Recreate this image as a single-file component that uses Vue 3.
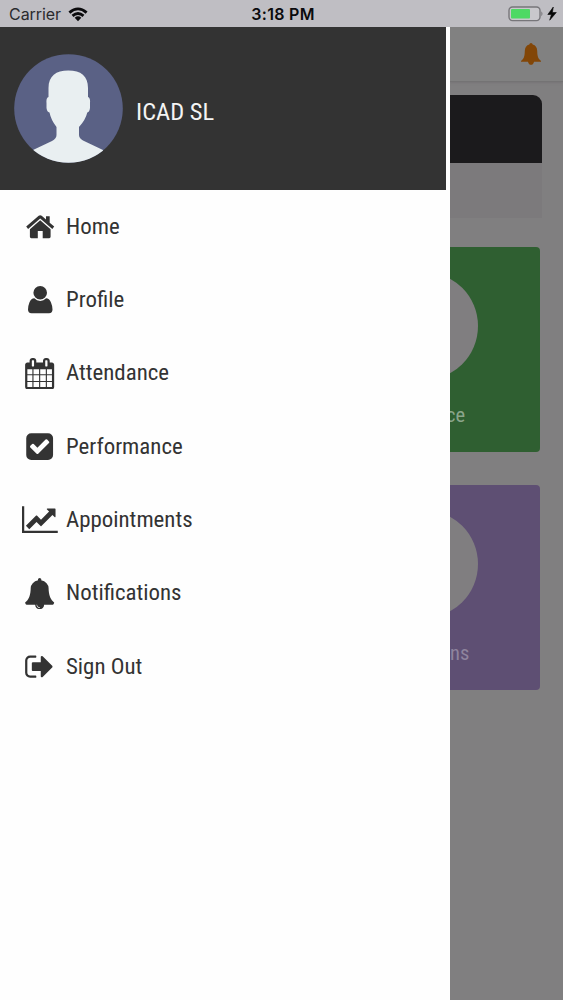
<script setup>
const items = [
  { label: 'Home', w: 1792, box: '0 0 40 40', d: 'M20.2 8.200Q21 8.200 21.700 8.800L26 12.500V9.300H29.700V15.700L34.200 19.600L32.300 22L20.200 11.600L8.100 22L6.200 19.600L18.700 8.800Q19.400 8.200 20.200 8.200zM20.200 13.200L30.600 22.200V29.800Q30.600 31.200 29.200 31.200H22.700V24H17.800V31.200H11.300Q9.900 31.200 9.900 29.800V22.200z' },
  { label: 'Profile', w: 1792, box: '0 0 40 40', d: 'M20.200 6A6.800 6.800 0 0 1 20.200 19.600A6.800 6.800 0 0 1 20.200 6zM14.300 18.300Q16.800 20.900 20.200 20.900T26.100 18.300Q29.200 18.300 30.900 22.200Q32.500 25.800 32.500 29.600Q32.500 33.200 29 33.200H11.500Q8 33.200 8 29.600Q8 25.800 9.500 22.200Q11.200 18.300 14.300 18.300z' },
  { label: 'Attendance', w: 1792, d: 'M192 1664h288v-288h-288v288zm352 0h320v-288h-320v288zm-352-352h288v-320h-288v320zm352 0h320v-320h-320v320zm-352-384h288v-288h-288v288zm736 736h320v-288h-320v288zm-384-736h320v-288h-320v288zm768 736h288v-288h-288v288zm-384-352h320v-320h-320v320zm-352-864v-288q0-13-9.500-22.500t-22.500-9.500h-64q-13 0-22.500 9.500t-9.500 22.500v288q0 13 9.500 22.500t22.500 9.500h64q13 0 22.500-9.500t9.500-22.500zm736 864h288v-320h-288v320zm-384-384h320v-288h-320v288zm384 0h288v-288h-288v288zm32-480v-288q0-13-9.500-22.500t-22.500-9.500h-64q-13 0-22.500 9.500t-9.500 22.500v288q0 13 9.500 22.500t22.500 9.500h64q13 0 22.500-9.500t9.500-22.500zm384-64v1280q0 52-38 90t-90 38h-1408q-52 0-90-38t-38-90v-1280q0-52 38-90t90-38h128v-96q0-66 47-113t113-47h64q66 0 113 47t47 113v96h384v-96q0-66 47-113t113-47h64q66 0 113 47t47 113v96h128q52 0 90 38t38 90z' },
  { label: 'Performance', w: 1792, d: 'M813 1299l614-614q19-19 19-45t-19-45l-102-102q-19-19-45-19t-45 19l-467 467-211-211q-19-19-45-19t-45 19l-102 102q-19 19-19 45t19 45l358 358q19 19 45 19t45-19zm851-883v960q0 119-84.500 203.500t-203.500 84.500h-960q-119 0-203.500-84.500t-84.500-203.500v-960q0-119 84.500-203.500t203.500-84.500h960q119 0 203.500 84.500t84.500 203.500z' },
  { label: 'Appointments', w: 2048, d: 'M2048 1536v128h-2048v-1536h128v1408h1920zm-128-1248v435q0 21-19.500 29.500t-35.500-7.500l-121-121-633 633q-10 10-23 10t-23-10l-233-233-416 416-192-192 585-585q10-10 23-10t23 10l233 233 464-464-121-121q-16-16-7.500-35.500t29.500-19.500h435q14 0 23 9t9 23z' },
  { label: 'Notifications', w: 1792, d: 'M912 1696q0-16-16-16-59 0-101.500-42.500t-42.500-101.500q0-16-16-16t-16 16q0 73 51.500 124.500t124.500 51.500q16 0 16-16zm816-288q0 52-38 90t-90 38h-448q0 106-75 181t-181 75-181-75-75-181h-448q-52 0-90-38t-38-90q50-42 91-88t85-119.500 74.500-158.500 50-206 19.500-260q0-152 117-282.500t307-158.500q-8-19-8-39 0-40 28-68t68-28 68 28 28 68q0 20-8 39 190 28 307 158.500t117 282.500q0 139 19.500 260t50 206 74.500 158.500 85 119.500 91 88z' },
  { label: 'Sign Out', w: 1792, d: 'M704 1440q0 4 1 20t.5 26.500-3 23.500-10 19.500-20.500 6.500h-320q-119 0-203.500-84.500t-84.500-203.500v-704q0-119 84.500-203.500t203.500-84.500h320q13 0 22.500 9.500t9.500 22.500q0 4 1 20t.5 26.500-3 23.500-10 19.500-20.500 6.500h-320q-66 0-113 47t-47 113v704q0 66 47 113t113 47h312l11.500 1 11.500 3 8 5.500 7 9 2 13.500zm928-544q0 26-19 45l-544 544q-19 19-45 19t-45-19-19-45v-288h-448q-26 0-45-19t-19-45v-384q0-26 19-45t45-19h448v-288q0-26 19-45t45-19 45 19l544 544q19 19 19 45z' },
]
</script>

<template>
  <div class="phone">
    <header class="status">
      <div class="carrier">
        <span>Carrier</span>
        <svg width="20" height="15" viewBox="0 0 20 15">
          <g fill="none" stroke="#0b0b0d" stroke-width="2.800">
            <path d="M1.400 5.600Q10-1.900 18.600 5.600" />
            <path d="M4.500 8.900Q10 4.100 15.500 8.900" />
          </g>
          <path d="M6.700 10.700Q10 8 13.300 10.700L10 14.200z" fill="#0b0b0d" />
        </svg>
      </div>
      <span class="clock">3:18 PM</span>
      <svg class="battery" width="50" height="17" viewBox="0 0 50 17">
        <rect x="2" y="2" width="31" height="13.600" rx="3.500" fill="#c9c8cc" stroke="#77767a" stroke-width="1.400" />
        <rect x="4" y="4" width="19" height="9.600" rx="1" fill="#4ed964" />
        <path d="M34.300 6.300q2.400 2.500 0 5z" fill="#77767a" />
        <path d="M46.300 2L40.800 9.500h3.600L42.700 15.200 49.300 7.500h-3.900z" fill="#050505" stroke="#050505" stroke-width=".6" />
      </svg>
    </header>

    <div class="body">
      <aside class="drawer">
        <div class="account">
          <svg class="avatar" width="109" height="109" viewBox="0 0 109 109">
            <defs><clipPath id="round"><circle cx="54.500" cy="54.500" r="54.300" /></clipPath></defs>
            <g clip-path="url(#round)">
              <rect width="109" height="109" fill="#5a6185" />
              <path d="M54.300 16.500C67 16.500 74 22 74 34V43Q76.500 44 76 49V54Q75.500 58 73.300 58.500Q71.500 66 65 73V81Q65 84 69 86.500L89 96V112H19V96L38 87Q42.500 84.500 42.500 81V73Q37 66 35.500 58.500Q33 58 32.500 54V49Q32 44 34.500 43V34C34.500 22 42 16.500 54.300 16.500z" fill="#e9eff1" />
            </g>
          </svg>
          <span class="name cond">ICAD SL</span>
        </div>
        <nav>
          <a v-for="item in items" :key="item.label" class="item">
            <span class="icon" :class="{ exit: item.label === 'Sign Out' }">
              <svg v-if="item.box" :viewBox="item.box" width="40" height="40"><path :d="item.d" /></svg>
              <svg v-else :viewBox="`0 0 ${item.w} 1792`" height="31.300" :width="31.3 * item.w / 1792"><path :d="item.d" /></svg>
            </span>
            <span class="label cond">{{ item.label }}</span>
          </a>
        </nav>
      </aside>

      <main class="page">
        <div class="topbar">
          <svg width="20" height="22" viewBox="0 0 20 22"><path d="M10 0Q11.500 0 11.700 1.500Q16 2.700 16.200 8Q16.300 14 18 16L20 18V18.700H13Q12.400 21.800 10 21.800T7 18.700H0V18L2 16Q3.700 14 3.800 8Q4 2.700 8.300 1.500Q8.500 0 10 0z" fill="#824607" /></svg>
        </div>
        <div class="summary"><div class="summary-head"></div></div>
        <div class="tile green"><div class="disc"></div><span class="cond ce">ce</span></div>
        <div class="tile purple"><div class="disc"></div><span class="cond ns">ns</span></div>
      </main>
    </div>
  </div>
</template>

<style>
body { background: #fff; }
</style>

<style scoped>
.phone { width: 563px; height: 1000px; overflow: hidden; display: flex; flex-direction: column; font-family: Roboto, "Liberation Sans", sans-serif; }
.status { height: 27px; flex: none; background: #bfbec3; display: grid; grid-template-columns: 1fr auto 1fr; align-items: center; padding: 0 6px 0 9px; box-sizing: border-box; font-family: Inter, sans-serif; font-size: 16px; color: #0b0b0d; }
.carrier { display: flex; align-items: center; gap: 7px; color: #2b2b2e; padding-top: 1px; letter-spacing: -.05px; }
.clock { font-weight: 600; letter-spacing: .3px; padding-top: 1px; }
.battery { justify-self: end; }
.body { flex: 1; display: flex; min-height: 0; }
.drawer { width: 450px; flex: none; background: #fefefe; }
.account { width: 446px; height: 163px; box-sizing: border-box; background: #333; display: flex; align-items: center; gap: 13px; padding: 0 14px; }
.cond { font-family: "Roboto Condensed", Roboto, sans-serif; font-stretch: 75%; white-space: nowrap; }
.name { font-size: 24.500px; color: #f4f4f4; padding-top: 6px; }
.item { display: flex; align-items: center; height: 73.330px; padding-left: 20px; color: #333; }
.icon { width: 40px; height: 32px; display: flex; align-items: center; justify-content: center; }
.icon svg { fill: #333; flex: none; }
.exit { justify-content: flex-start; padding-left: 3.500px; width: 36.500px; }
.label { font-size: 22.900px; padding: 0 0 1px 6px; }
.page { flex: 1; min-width: 0; background: #807f80; overflow: hidden; }
.topbar { height: 55px; box-sizing: border-box; background: #818181; border-bottom: 1px solid #747374; box-shadow: 0 1px 2px #767576; display: flex; align-items: center; justify-content: flex-end; padding-right: 22px; }
.summary { width: 92px; height: 123px; margin-top: 13px; background: #7c7a7c; border-radius: 0 9px 0 0; overflow: hidden; }
.summary-head { height: 68px; background: #1b1a1c; }
.tile { width: 90px; height: 205px; border-radius: 0 4px 4px 0; overflow: hidden; font-size: 20.500px; display: flex; flex-direction: column; align-items: flex-start; }
.green { margin-top: 29px; background: #2f5f31; }
.purple { margin-top: 33px; background: #5e4f73; }
.disc { width: 108px; height: 108px; border-radius: 50%; background: #807e80; margin: 25px 0 0 -80px; flex: none; }
.green span { color: #8ba58b; }
.purple span { color: #8f849e; }
.ce { margin: 23px 0 0 -4px; }
.ns { margin: 23px 0 0 0; }
</style>
